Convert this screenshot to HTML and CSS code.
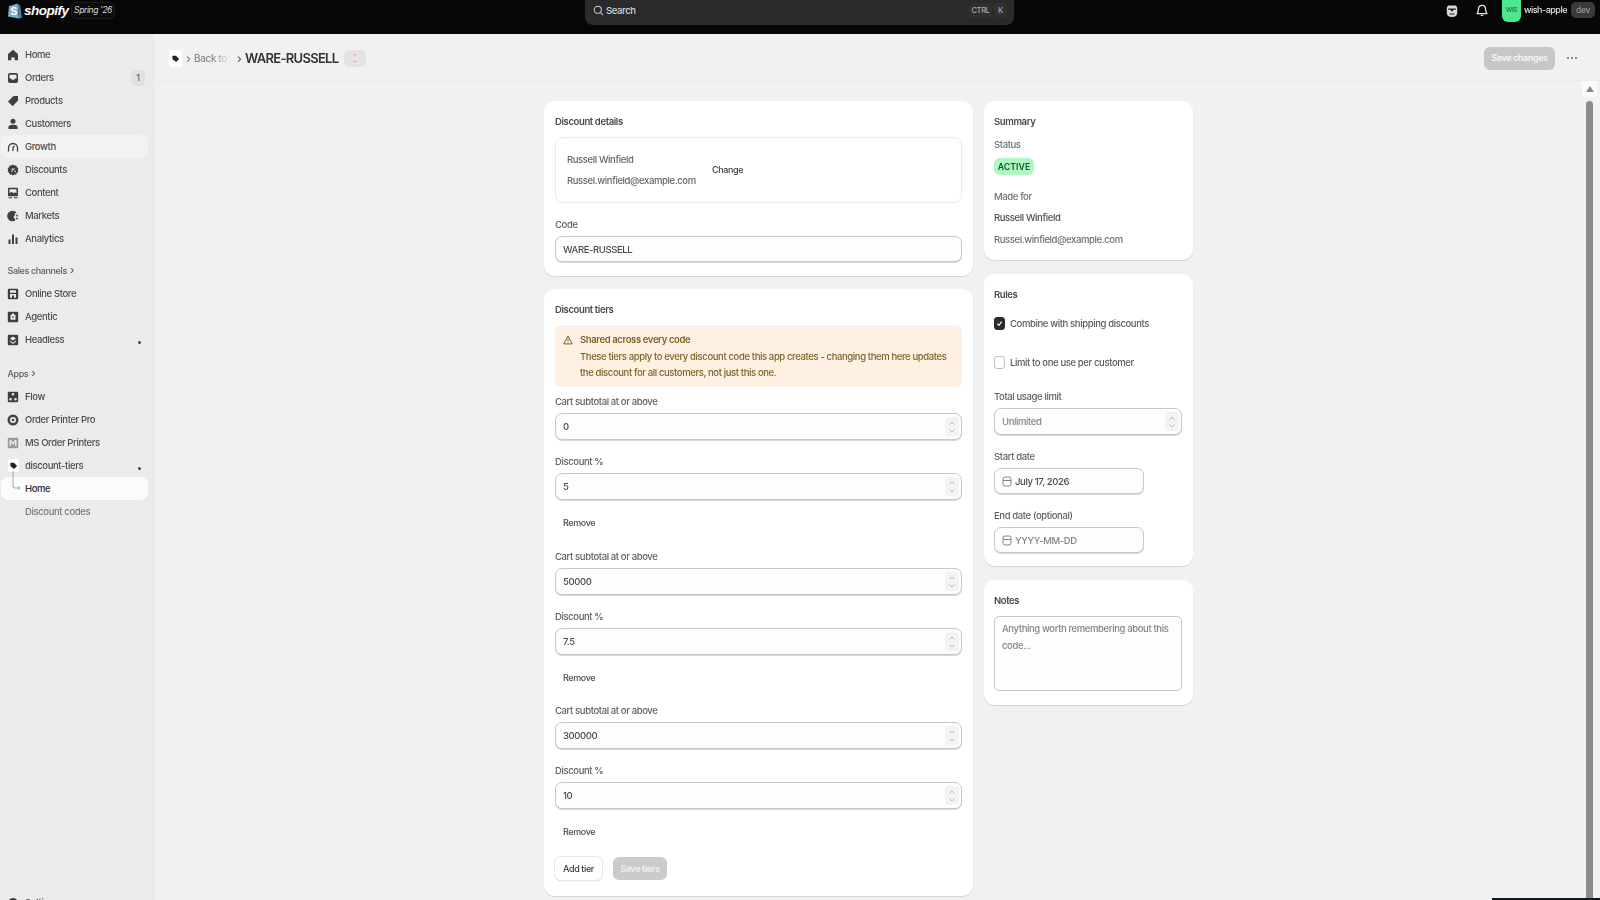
FILE: index.html
```html
<!DOCTYPE html>
<html lang="en">
<head>
<meta charset="utf-8">
<title>WARE-RUSSELL</title>
<link rel="stylesheet" href="styles.css">
</head>
<body>
<div class="app">
  <header class="topbar">
    <div class="brand">
      <svg class="bag" viewBox="0 0 14 17"><path fill="#7fb0c9" d="M1 4.200 9.600 1.600 11 16.500 0 14.600z"/><path fill="#3f86a8" d="M9.600 1.600 12 3.400 14 15.800 11 16.500z"/><text x="2.600" y="12.800" class="bag-s">S</text></svg>
      <span class="wordmark">shopify</span>
      <span class="spring">Spring '26</span>
    </div>
    <div class="search">
      <svg class="search-icon" viewBox="0 0 12 12"><circle cx="5.200" cy="5.200" r="3.900"/><path d="m8.200 8.200 2.800 2.800"/></svg>
      <span class="search-text">Search</span>
      <span class="kbd kbd-wide">CTRL</span>
      <span class="kbd">K</span>
    </div>
    <div class="top-right">
      <svg class="top-icon" viewBox="0 0 12 14"><path fill="#d8d8d8" d="M2 1.500h8l1.200 2.200V9c0 2.400-2 4-5.200 4S.8 11.400.8 9V3.700z"/><path fill="#1a1a1a" d="M2.200 4.600h7.600v1.200H7.400L6.800 7.200H5.200l-.6-1.400H2.200zM3.500 9.500h5v1h-5z"/></svg>
      <svg class="top-icon bell" viewBox="0 0 12 14"><path fill="none" stroke="#e4e4e4" stroke-width="1.300" d="M6 1.300c-2.300 0-3.500 1.700-3.500 3.700 0 2.500-1.300 3.700-1.300 4.600h9.600c0-.9-1.300-2.100-1.300-4.600 0-2-1.200-3.700-3.500-3.700z"/><path fill="#e4e4e4" d="M4.400 10.800h3.200c0 1.900-3.200 1.900-3.200 0z"/></svg>
      <span class="avatar">WIS</span>
      <span class="store">wish-apple</span>
      <span class="dev">dev</span>
    </div>
  </header>

  <div class="body">
    <nav class="sidebar">
      <ul class="nav-group nav-main">
        <li class="nav-item"><svg class="ni" viewBox="0 0 12 12"><path d="M6 .8 11 5v6.200H7.700V8.400H4.300v2.800H1V5z"/></svg>Home</li>
        <li class="nav-item"><svg class="ni" viewBox="0 0 12 12"><path fill-rule="evenodd" d="M3 1h6a2 2 0 0 1 2 2v6a2 2 0 0 1-2 2H3a2 2 0 0 1-2-2V3a2 2 0 0 1 2-2zm-.5 5.500v-3a.8.8 0 0 1 .8-.8h5.400a.8.800 0 0 1 .8.800v3H8c-.3 1-1 1.300-2 1.300S4.300 7.500 4 6.500z"/></svg>Orders<span class="count">1</span></li>
        <li class="nav-item"><svg class="ni" viewBox="0 0 12 12"><path d="M6.500 1H11v4.500L5.600 11.200 1 6.600z"/></svg>Products</li>
        <li class="nav-item"><svg class="ni" viewBox="0 0 12 12"><circle cx="6" cy="3.300" r="2.500"/><path d="M1.500 11V9.200C1.500 7.600 3 6.800 6 6.800s4.500.8 4.500 2.400V11z"/></svg>Customers</li>
        <li class="nav-item nav-hover"><svg class="ni ni-line" viewBox="0 0 12 12"><path d="M1.500 10.500V7a4.500 4.500 0 0 1 9 0v3.500M6 10V6.500l1.600-1.600"/></svg>Growth</li>
        <li class="nav-item"><svg class="ni" viewBox="0 0 12 12"><path fill-rule="evenodd" d="M6 .5l1.500 1.100 1.800-.1.600 1.700 1.500 1L10.800 6l.6 1.800-1.500 1-.6 1.700-1.800-.1L6 11.500l-1.500-1.100-1.800.1-.6-1.700-1.500-1L1.200 6 .6 4.200l1.500-1 .6-1.700 1.800.1zM4 7.500l.6.600 3.400-3.600-.6-.6zM4.500 5a.7.700 0 1 0 0-.1zm3 2.500a.7.700 0 1 0 0-.1z"/></svg>Discounts</li>
        <li class="nav-item"><svg class="ni" viewBox="0 0 12 12"><path fill-rule="evenodd" d="M2 .8h8a1 1 0 0 1 1 1v6.400a1 1 0 0 1-1 1H2a1 1 0 0 1-1-1V1.800a1 1 0 0 1 1-1zm.500 1.500v4l2-1.500 2 1.500 1.500-1 1.500 1v-4zM1.500 10.200h3.500v1H1.500zm5.500 0h3.500v1H7z"/></svg>Content</li>
        <li class="nav-item"><svg class="ni" viewBox="0 0 12 12"><path fill-rule="evenodd" d="M5.500.7c1.700 0 3.100.7 4 1.900L7.600 3.500l.6 1.500-1.500 1.300.4 2.200 1.200.3-.1 1.800c-.8.400-1.700.700-2.700.7a5.300 5.300 0 0 1 0-10.600z"/><circle cx="10" cy="5.500" r=".9"/><circle cx="10" cy="8.500" r=".9"/></svg>Markets</li>
        <li class="nav-item"><svg class="ni" viewBox="0 0 12 12"><path d="M1.500 6.500h2V11h-2zM5 1.500h2V11H5zM8.500 4.500h2V11h-2z"/></svg>Analytics</li>
      </ul>
      <div class="nav-heading">Sales channels <span class="chev">›</span></div>
      <ul class="nav-group">
        <li class="nav-item"><svg class="ni" viewBox="0 0 12 12"><path fill-rule="evenodd" d="M2 .8h8a1.200 1.200 0 0 1 1.200 1.200v8a1.200 1.200 0 0 1-1.200 1.200H2A1.200 1.200 0 0 1 .8 10V2A1.200 1.200 0 0 1 2 .8zM3 2.300v2.400h6V2.300zM3 6v3.700h2V7.500h2v2.200h2V6z"/></svg>Online Store</li>
        <li class="nav-item"><svg class="ni" viewBox="0 0 12 12"><path fill-rule="evenodd" d="M2 .8h8a1.200 1.200 0 0 1 1.200 1.200v8a1.200 1.200 0 0 1-1.200 1.200H2A1.200 1.200 0 0 1 .8 10V2A1.200 1.200 0 0 1 2 .8zM5 2.500v1.200H3.500v5h5v-5H7V2.500zM5 5.500h2v1H5z"/></svg>Agentic</li>
        <li class="nav-item"><svg class="ni" viewBox="0 0 12 12"><path fill-rule="evenodd" d="M2 .8h8a1.200 1.200 0 0 1 1.200 1.200v8a1.200 1.200 0 0 1-1.200 1.200H2A1.200 1.200 0 0 1 .8 10V2A1.200 1.200 0 0 1 2 .8zM6 2.500 3 4.500l3 2 3-2zM3 6.500l3 2.300 3-2.300v1.200L6 10 3 7.700z"/></svg>Headless<span class="nav-dot"></span></li>
      </ul>
      <div class="nav-heading nav-heading-apps">Apps <span class="chev">›</span></div>
      <ul class="nav-group">
        <li class="nav-item"><svg class="ni" viewBox="0 0 12 12"><path fill-rule="evenodd" d="M2 .8h8a1.200 1.200 0 0 1 1.200 1.200v8a1.200 1.200 0 0 1-1.200 1.200H2A1.200 1.200 0 0 1 .8 10V2A1.200 1.200 0 0 1 2 .8zM6 2a1.300 1.300 0 1 0 0 2.600A1.300 1.300 0 0 0 6 2zM3.500 7a1.300 1.300 0 1 0 0 2.600 1.300 1.300 0 0 0 0-2.600zm5 0a1.300 1.300 0 1 0 0 2.600 1.300 1.300 0 0 0 0-2.600z"/></svg>Flow</li>
        <li class="nav-item"><svg class="ni" viewBox="0 0 12 12"><path fill-rule="evenodd" fill="#444" d="M6 .5a5.500 5.500 0 1 1 0 11 5.500 5.500 0 0 1 0-11zm0 2.500a3 3 0 1 0 0 6 3 3 0 0 0 0-6z"/><circle cx="6" cy="6" r="1.300"/></svg>Order Printer Pro</li>
        <li class="nav-item"><svg class="ni ni-ms" viewBox="0 0 12 12"><rect x=".8" y=".8" width="10.400" height="10.400" rx="1" fill="#9a9a9a"/><path fill="#e6e6e6" d="M2.500 3h1.500l2 2.500L8 3h1.500v6H8V5.500L6 8 4 5.500V9H2.500z"/></svg>MS Order Printers</li>
        <li class="nav-item"><span class="app-chip"><svg class="tag" viewBox="0 0 10 10"><path d="M1.500 2h4L9 5.600 5.600 9 1.500 5.500z"/></svg></span>discount-tiers<span class="nav-dot"></span></li>
        <li class="nav-item nav-active"><svg class="sub-arrow" viewBox="0 0 10 24"><path d="M2 0v15q0 2 2 2h5M7 15l2 2-2 2"/></svg>Home</li>
        <li class="nav-item nav-sub">Discount codes</li>
      </ul>
      <div class="nav-settings"><svg class="ni" viewBox="0 0 12 12"><circle cx="6" cy="6" r="5"/></svg>Settings</div>
    </nav>

    <main class="main">
      <div class="page-head">
        <span class="crumb-chip"><svg class="tag" viewBox="0 0 10 10"><path d="M1.500 2h4L9 5.600 5.600 9 1.500 5.500z"/></svg></span>
        <span class="crumb-sep">›</span>
        <span class="crumb-link">Back to</span>
        <span class="crumb-sep crumb-sep-2">›</span>
        <h1 class="page-title">WARE-RUSSELL</h1>
        <span class="title-badge"><svg class="badge-svg" viewBox="0 0 8 11"><rect width="7" height="10" x=".5" y=".5" rx="1" fill="#efdfe6"/><path d="M2 2h4M2 8.500h4" stroke="#e9a27e" stroke-width=".8"/></svg></span>
        <span class="save-changes">Save changes</span>
        <span class="more"><i></i><i></i><i></i></span>
      </div>
      <div class="scroll-wrap">
        <div class="content">
          <div class="col-left">
            <section class="card card-details">
              <h2 class="card-title">Discount details</h2>
              <div class="customer-box">
                <div class="customer-text">
                  <div class="customer-name">Russell Winfield</div>
                  <div class="customer-email">Russel.winfield@example.com</div>
                </div>
                <span class="change">Change</span>
              </div>
              <div class="field field-code">
                <label class="label">Code</label>
                <div class="input"><span class="val">WARE-RUSSELL</span></div>
              </div>
            </section>

            <section class="card card-tiers">
              <h2 class="card-title">Discount tiers</h2>
              <div class="banner">
                <svg class="warn" viewBox="0 0 12 12"><path d="M6 1.300 11 10.700H1zM6 4.500v3M6 8.700v.6"/></svg>
                <div class="banner-body">
                  <div class="banner-title">Shared across every code</div>
                  <div class="banner-text">These tiers apply to every discount code this app creates - changing them here updates the discount for all customers, not just this one.</div>
                </div>
              </div>
              <div class="tier">
                <div class="field"><label class="label">Cart subtotal at or above</label><div class="input"><span class="val">0</span><span class="spin"><svg viewBox="0 0 8 14"><path d="M1.500 4.500 4 2l2.500 2.500M1.500 9.500 4 12l2.500-2.500"/></svg></span></div></div>
                <div class="field"><label class="label">Discount %</label><div class="input"><span class="val">5</span><span class="spin"><svg viewBox="0 0 8 14"><path d="M1.500 4.500 4 2l2.500 2.500M1.500 9.500 4 12l2.500-2.500"/></svg></span></div></div>
                <span class="remove">Remove</span>
              </div>
              <div class="tier">
                <div class="field"><label class="label">Cart subtotal at or above</label><div class="input"><span class="val">50000</span><span class="spin"><svg viewBox="0 0 8 14"><path d="M1.500 4.500 4 2l2.500 2.500M1.500 9.500 4 12l2.500-2.500"/></svg></span></div></div>
                <div class="field"><label class="label">Discount %</label><div class="input"><span class="val">7.5</span><span class="spin"><svg viewBox="0 0 8 14"><path d="M1.500 4.500 4 2l2.500 2.500M1.500 9.500 4 12l2.500-2.500"/></svg></span></div></div>
                <span class="remove">Remove</span>
              </div>
              <div class="tier">
                <div class="field"><label class="label">Cart subtotal at or above</label><div class="input"><span class="val">300000</span><span class="spin"><svg viewBox="0 0 8 14"><path d="M1.500 4.500 4 2l2.500 2.500M1.500 9.500 4 12l2.500-2.500"/></svg></span></div></div>
                <div class="field"><label class="label">Discount %</label><div class="input"><span class="val">10</span><span class="spin"><svg viewBox="0 0 8 14"><path d="M1.500 4.500 4 2l2.500 2.500M1.500 9.500 4 12l2.500-2.500"/></svg></span></div></div>
                <span class="remove">Remove</span>
              </div>
              <div class="tier-actions">
                <span class="btn-add">Add tier</span>
                <span class="btn-save">Save tiers</span>
              </div>
            </section>
          </div>

          <div class="col-right">
            <section class="card card-summary">
              <h2 class="card-title">Summary</h2>
              <div class="sum-label sum-status">Status</div>
              <span class="pill">ACTIVE</span>
              <div class="sum-label sum-made">Made for</div>
              <div class="sum-name">Russell Winfield</div>
              <div class="sum-label sum-email">Russel.winfield@example.com</div>
            </section>

            <section class="card card-rules">
              <h2 class="card-title">Rules</h2>
              <div class="check-row check-first"><span class="box box-on"><svg viewBox="0 0 10 10"><path d="m2.500 5.200 1.800 1.800 3.200-4"/></svg></span>Combine with shipping discounts</div>
              <div class="check-row check-second"><span class="box"></span>Limit to one use per customer</div>
              <div class="field field-usage"><label class="label">Total usage limit</label><div class="input"><span class="ph">Unlimited</span><span class="spin"><svg viewBox="0 0 8 14"><path d="M1.500 4.500 4 2l2.500 2.500M1.500 9.500 4 12l2.500-2.500"/></svg></span></div></div>
              <div class="field field-date"><label class="label">Start date</label><div class="input input-date"><svg class="cal" viewBox="0 0 10 11"><rect x="1" y="1" width="8" height="9" rx="2"/><path d="M1 4.500h8"/></svg><span class="val">July 17, 2026</span></div></div>
              <div class="field field-date"><label class="label">End date (optional)</label><div class="input input-date"><svg class="cal" viewBox="0 0 10 11"><rect x="1" y="1" width="8" height="9" rx="2"/><path d="M1 4.500h8"/></svg><span class="ph">YYYY-MM-DD</span></div></div>
            </section>

            <section class="card card-notes">
              <h2 class="card-title">Notes</h2>
              <div class="textarea">Anything worth remembering about this code...</div>
            </section>
          </div>
        </div>
        <div class="scrollbar">
          <span class="sb-up"></span>
          <span class="sb-thumb"></span>
        </div>
      </div>
    </main>
  </div>
  <div class="bottom-strip"></div>
</div>
</body>
</html>
```

FILE: styles.css
```css
* { box-sizing: border-box; }
html, body { margin: 0; padding: 0; height: 100%; overflow: hidden; }
body { font-family: Inter, "Liberation Sans", sans-serif; font-size: 9.500px; letter-spacing: -.38px; font-weight: 450; color: #303030; background: #f1f1f1; }
ul { list-style: none; margin: 0; padding: 0; }
h1, h2 { margin: 0; }

.app { position: relative; display: flex; flex-direction: column; height: 900px; overflow: hidden; filter: blur(0.5px); }

/* top bar */
.topbar { flex: 0 0 34px; background: #070707; display: grid; grid-template-columns: 585px 429px 1fr; color: #e3e3e3; }
.brand { display: flex; align-items: flex-start; padding: 2px 0 0 8px; }
.bag { width: 14px; height: 17px; flex: none; }
.bag-s { font: bold 10px "Liberation Sans", sans-serif; fill: #fff; }
.wordmark { font: italic bold 13.500px/17px "Liberation Sans", sans-serif; color: #fff; margin-left: 2px; letter-spacing: -.5px; width: 47px; }
.spring { height: 17px; width: 44px; border: 1px solid #1e1e1e; border-radius: 5px; font-style: italic; font-size: 8.500px; line-height: 15px; text-align: center; color: #d9d9d9; background: #0c0c0c; white-space: nowrap; }
.search { height: 25px; background: #2a2a2a; border-radius: 0 0 8px 8px; display: flex; align-items: center; padding: 0 7px 5px 8px; }
.search-icon { width: 11px; height: 11px; fill: none; stroke: #cfcfcf; stroke-width: 1.100; margin-top: 1px; }
.search-text { margin-left: 2px; flex: 1; color: #d4d4d4; font-size: 9.500px; }
.kbd { height: 15px; min-width: 13px; background: #303030; border-radius: 3px; color: #a9a9a9; font-size: 7.500px; line-height: 15px; text-align: center; margin-left: 2px; margin-top: 0; }
.kbd-wide { width: 23px; }
.top-right { display: flex; align-items: flex-start; }
.top-icon { width: 12px; height: 14px; margin-top: 4px; margin-left: 432px; flex: none; }
.bell { margin-left: 18px; }
.avatar { margin-left: 14px; width: 19px; height: 22px; background: #4de58f; border-radius: 0 0 6px 6px; color: #1c6e43; font-size: 6.500px; line-height: 20px; text-align: center; flex: none; }
.store { margin-left: 3px; line-height: 20px; color: #dfe2ea; font-weight: 500; font-size: 9px; letter-spacing: -.5px; white-space: nowrap; width: 46px; flex: none; }
.dev { margin-left: 1px; margin-top: 2px; width: 24px; height: 16px; border-radius: 5px; background: #3a3a3a; color: #999; font-size: 8.500px; line-height: 16px; text-align: center; flex: none; }

/* layout */
.body { flex: 1; display: flex; min-height: 0; }
.sidebar { flex: 0 0 155px; background: #ebebeb; padding: 9px 7px 0 1px; position: relative; display: flex; flex-direction: column; overflow: hidden; }
.main { flex: 1; display: flex; flex-direction: column; min-width: 0; }

/* nav */
.nav-item { position: relative; height: 23px; display: flex; align-items: center; padding-left: 24px; color: #4d4d4d; border-radius: 7px; font-weight: 500; }
.ni { position: absolute; left: 6px; top: 6px; width: 12px; height: 12px; fill: #3f3f3f; }
.ni-line { fill: none; stroke: #3f3f3f; stroke-width: 1.300; }
.nav-hover { background: #f2f2f2; }
.nav-active { background: #fbfbfb; color: #303030; }
.nav-sub { color: #7a7a7a; }
.count { position: absolute; right: 3px; top: 4px; width: 14px; height: 16px; background: #e0e0e0; border-radius: 5px; text-align: center; line-height: 16px; font-size: 9px; color: #666; }
.nav-dot { position: absolute; right: 7px; top: 13px; width: 3px; height: 3px; border-radius: 50%; background: #444; }
.nav-heading { font-size: 9px; color: #5c5c5c; height: 14px; line-height: 14px; padding-left: 6.500px; margin: 13px 0 5px; font-weight: 500; }
.nav-heading-apps { margin-top: 15px; margin-bottom: 5px; }
.chev { margin-left: 1px; font-size: 11px; }
.app-chip { position: absolute; left: 7px; top: 5px; width: 11px; height: 13px; background: #fff; border-radius: 2px; display: flex; align-items: center; justify-content: center; }
.tag { width: 9px; height: 9px; fill: #222; }
.sub-arrow { position: absolute; left: 10px; top: -6px; width: 10px; height: 24px; fill: none; stroke: #9c9c9c; stroke-width: .9; }
.nav-settings { position: relative; margin-top: 374px; padding-left: 24px; height: 20px; color: #4d4d4d; font-weight: 500; flex: none; }
.nav-settings .ni { top: 0; }

/* page head */
.page-head { flex: 0 0 47px; display: flex; align-items: center; padding: 2px 23px 0 14px; border-bottom: 1px solid #ececec; }
.crumb-chip { width: 13px; height: 17px; background: #fff; border-radius: 3px; display: flex; align-items: center; justify-content: center; }
.crumb-sep { margin-left: 4px; color: #8a8a8a; font-size: 12px; width: 5px; }
.crumb-sep-2 { margin-left: 10px; color: #666; }
.crumb-link { margin-left: 3px; width: 33px; white-space: nowrap; color: #8a8a8a; font-size: 10px; -webkit-mask-image: linear-gradient(90deg, #000 55%, rgba(0,0,0,.25)); mask-image: linear-gradient(90deg, #000 55%, rgba(0,0,0,.25)); }
.page-title { margin-left: 3px; font-size: 13px; font-weight: 600; color: #333; letter-spacing: -.7px; white-space: nowrap; }
.title-badge { margin-left: 6px; width: 22px; height: 17px; background: #e3e3e3; border-radius: 5px; display: flex; align-items: center; justify-content: center; }
.badge-svg { width: 8px; height: 11px; }
.save-changes { margin-left: auto; width: 71px; height: 23px; background: #c7c7c7; border-radius: 6px; color: #f6f6f6; font-size: 9px; font-weight: 600; line-height: 22px; text-align: center; white-space: nowrap; }
.more { margin-left: 12px; width: 10px; display: flex; justify-content: space-between; }
.more i { width: 2px; height: 2px; border-radius: 50%; background: #666; }

/* content */
.scroll-wrap { flex: 1; display: flex; min-height: 0; overflow: hidden; }
.content { flex: 1; display: flex; justify-content: center; gap: 11px; padding-top: 20px; min-width: 0; }
.col-left { width: 429px; display: flex; flex-direction: column; gap: 13px; flex: none; }
.col-right { width: 209px; display: flex; flex-direction: column; gap: 14px; flex: none; }
.card { background: #fff; border-radius: 11px; padding: 14px 11px; box-shadow: 0 1px 1px rgba(0,0,0,.12); flex: none; }
.card-title { font-size: 9.500px; line-height: 14px; font-weight: 600; color: #4a4a4a; }

.card-details { height: 175px; }
.customer-box { margin-top: 8px; height: 66px; border: 1px solid #ebebeb; border-radius: 8px; display: flex; align-items: center; padding-left: 11px; }
.customer-name, .customer-email { line-height: 21px; color: #666; white-space: nowrap; }
.customer-text { width: 145px; }
.change { color: #3c3c3c; font-size: 9px; font-weight: 450; margin-bottom: 1px; }
.field { display: flex; flex-direction: column; gap: 4px; }
.field-code { margin-top: 15px; }
.label { height: 14px; line-height: 14px; color: #616161; white-space: nowrap; }
.input { position: relative; height: 27px; border: 1px solid #c8c8c8; border-radius: 7px; background: #fdfdfd; display: flex; align-items: center; padding: 0 7px; box-shadow: 0 1px 0 #d8d8d8; }
.field-code .input, .input-date { height: 26px; }
.val { color: #4c4c4c; }
.ph { color: #858585; }
.spin { position: absolute; right: 2px; top: 3px; bottom: 3px; width: 14px; background: #f3f3f3; border-radius: 3px; display: flex; align-items: center; justify-content: center; }
.spin svg { width: 8px; height: 16px; fill: none; stroke: #a8a8a8; stroke-width: .8; }

.card-tiers { height: 607px; padding-bottom: 0; }
.banner { margin-top: 8px; height: 62px; background: #fef1e4; border-radius: 6px; display: flex; padding: 8px 8px 0; gap: 7px; color: #80622a; }
.warn { width: 10px; height: 12px; margin-top: 1px; flex: none; fill: none; stroke: #6e5522; stroke-width: 1.100; }
.banner-title { font-weight: 600; line-height: 14px; }
.banner-text { line-height: 16px; margin-top: 2px; }
.tier { display: flex; flex-direction: column; gap: 15px; margin-top: 8px; padding-bottom: 7px; }
.tier + .tier { padding-bottom: 6px; }
.remove { display: block; padding-left: 8px; line-height: 24px; height: 24px; margin-top: -4px; color: #4a4a4a; font-size: 9px; font-weight: 450; }
.tier-actions { display: flex; gap: 11px; margin-top: 7px; }
.btn-add { width: 47px; height: 23px; border-radius: 6px; background: #fff; box-shadow: 0 0 0 1px #e8e8e8, 0 1px 1px #bbb; color: #3a3a3a; font-size: 9px; font-weight: 500; line-height: 23px; text-align: center; white-space: nowrap; }
.btn-save { width: 54px; height: 23px; border-radius: 6px; background: #cbcbcb; color: #f0f0f0; font-size: 9px; font-weight: 600; line-height: 23px; text-align: center; white-space: nowrap; }

.card-summary { height: 159px; padding-left: 10px; }
.sum-label, .sum-name { line-height: 14px; color: #707070; white-space: nowrap; }
.sum-status { margin-top: 9px; }
.pill { display: block; width: 40px; height: 17px; margin-top: 6px; background: #b1f7c2; border-radius: 6px; color: #0d5a36; font-size: 8.800px; font-weight: 600; line-height: 17px; text-align: center; letter-spacing: 0; }
.sum-made { margin-top: 15px; }
.sum-name { margin-top: 7px; color: #4f4f4f; }
.sum-email { margin-top: 7.500px; }

.card-rules { height: 292px; padding-left: 10px; }
.check-row { display: flex; align-items: center; gap: 5px; height: 14px; color: #5c5c5c; white-space: nowrap; }
.check-first { margin-top: 14px; }
.check-second { margin-top: 25px; }
.box { width: 11px; height: 13px; border-radius: 3px; border: 1px solid #bdbdbd; background: #fff; flex: none; display: flex; }
.box-on { background: #2b2b2b; border-color: #2b2b2b; }
.box svg { width: 9px; height: 11px; fill: none; stroke: #fff; stroke-width: 1.300; }
.field-usage { margin-top: 21px; }
.field-date { margin-top: 15px; width: 150px; }
.input-date { gap: 3px; padding-left: 7px; }
.cal { width: 10px; height: 11px; fill: none; stroke: #777; stroke-width: .9; flex: none; }

.card-notes { height: 125px; padding-left: 10px; }
.textarea { margin-top: 8px; height: 75px; border: 1px solid #c8c8c8; border-radius: 5px; background: #fdfdfd; padding: 4px 7px; line-height: 16.500px; color: #858585; }

/* scrollbar */
.scrollbar { flex: 0 0 18px; display: flex; flex-direction: column; align-items: center; padding-right: 3px; }
.sb-up { width: 15px; height: 16px; background: #fbfbfb; position: relative; flex: none; }
.sb-up::after { content: ""; position: absolute; left: 4px; top: 5px; border: 4px solid transparent; border-top: 0; border-bottom: 6px solid #8a8a8a; }
.sb-thumb { flex: 1; width: 7px; margin-top: 4px; background: #8c8c8c; border-radius: 4px 4px 0 0; }
.bottom-strip { position: absolute; left: 1492px; right: 0; bottom: 0; height: 2px; background: #15191c; }
```
